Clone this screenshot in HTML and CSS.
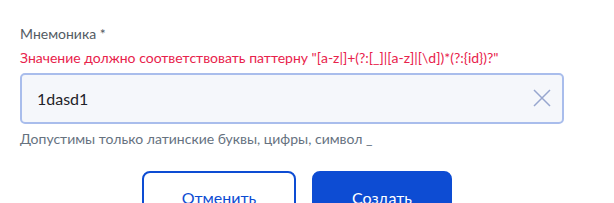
FILE: index.html
```html
<!DOCTYPE html>
<html lang="ru">
<head>
    <meta charset="UTF-8">
    <meta name="viewport" content="width=device-width, initial-scale=1.0">
    <title>Мнемоника</title>
    <link rel="stylesheet" href="styles.css">
</head>
<body>
    <div class="form">
        <div class="field">
            <label class="label" for="mnemonic">Мнемоника *</label>
            <div class="error">Значение должно соответствовать паттерну "[a-z|]+(?:[_]|[a-z]|[\d])*(?:{id})?"</div>
            <div class="input-wrap">
                <input type="text" id="mnemonic" value="1dasd1">
                <button class="clear" type="button" aria-label="Очистить">
                    <svg width="18" height="18" viewBox="0 0 18 18">
                        <path d="M1 1L17 17M17 1L1 17" stroke="#97a6cf" stroke-width="1.5" fill="none"/>
                    </svg>
                </button>
            </div>
            <div class="hint">Допустимы только латинские буквы, цифры, символ _</div>
        </div>

        <div class="actions">
            <button class="btn btn-outline" type="button">Отменить</button>
            <button class="btn btn-primary" type="button">Создать</button>
        </div>
    </div>
</body>
</html>
```

FILE: styles.css
```css
body {
    font-family: Lato, "Noto Sans", sans-serif;
    margin: 0;
    padding: 0;
    background-color: #fff;
}
.form {
    padding: 26px 50px 0 20px;
}
.label {
    display: block;
    font-size: 14px;
    line-height: 16px;
    color: #535b63;
    margin-bottom: 8px;
}
.error {
    font-size: 14px;
    line-height: 16px;
    color: #e8224b;
    margin-bottom: 7px;
}
.input-wrap {
    position: relative;
}
input[type="text"] {
    width: 100%;
    height: 51px;
    padding: 0 50px 0 15px;
    border: 2px solid #a9bdec;
    border-radius: 5px;
    background-color: #f5f7fb;
    box-sizing: border-box;
    font-family: inherit;
    font-size: 16px;
    color: #1f2329;
    outline: none;
}
.clear {
    position: absolute;
    right: 13px;
    top: 16px;
    padding: 0;
    border: none;
    background: none;
    cursor: pointer;
}
.hint {
    margin-top: 7px;
    font-size: 14px;
    line-height: 16px;
    color: #66727f;
}
.actions {
    display: flex;
    justify-content: center;
    gap: 16px;
    margin-top: 24px;
    padding-left: 10px;
}
.btn {
    height: 52px;
    padding: 0 36px;
    border-radius: 8px;
    font-family: inherit;
    font-size: 16px;
    cursor: pointer;
}
.btn-outline {
    width: 154px;
    background-color: #fff;
    border: 2px solid #0d4cd3;
    color: #0d4cd3;
}
.btn-primary {
    width: 140px;
    background-color: #0d4cd3;
    border: 2px solid #0d4cd3;
    color: #fff;
}
```
